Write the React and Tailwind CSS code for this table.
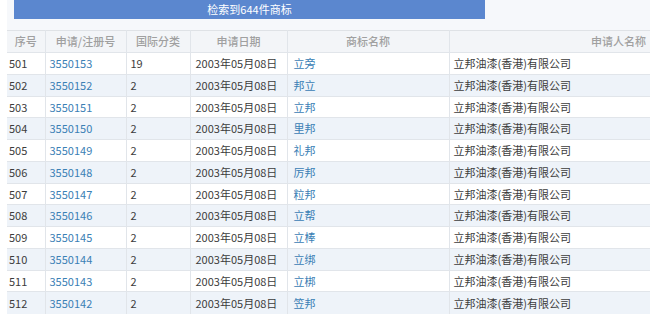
import React from "react";

const rows = [
  ["501", "3550153", "19", "立旁"],
  ["502", "3550152", "2", "邦立"],
  ["503", "3550151", "2", "立邦"],
  ["504", "3550150", "2", "里邦"],
  ["505", "3550149", "2", "礼邦"],
  ["506", "3550148", "2", "厉邦"],
  ["507", "3550147", "2", "粒邦"],
  ["508", "3550146", "2", "立帮"],
  ["509", "3550145", "2", "立棒"],
  ["510", "3550144", "2", "立绑"],
  ["511", "3550143", "2", "立梆"],
  ["512", "3550142", "2", "笠邦"],
];

const App = () => {
  return (
    <div
      className="w-[659px] h-[333px] bg-white overflow-hidden text-[11px] text-[#3c3c3c]"
      style={{ fontFamily: '"Noto Sans CJK SC", "Noto Sans", sans-serif' }}
    >
      <div className="ml-[7px] w-[643px] bg-[#f6f8fb]">
        {/* top bar */}
        <div className="h-[30px] pl-[7px]">
          <div className="w-[471px] h-[19px] bg-[#5b87cf] text-white text-[11px] flex items-center justify-center leading-none">
            检索到644件商标
          </div>
        </div>

        {/* table */}
        <table className="w-full border-collapse table-fixed">
          <colgroup>
            <col className="w-[38px]" />
            <col className="w-[81px]" />
            <col className="w-[64px]" />
            <col className="w-[97px]" />
            <col className="w-[162px]" />
            <col />
          </colgroup>
          <thead>
            <tr className="h-[22px] bg-[#f3f5f8] text-[#a0a0a0] border-t border-[#dfe2e6]">
              <th className="font-medium text-center border-r border-[#e1e5ea]">序号</th>
              <th className="font-medium text-center border-r border-[#e1e5ea]">申请/注册号</th>
              <th className="font-medium text-center border-r border-[#e1e5ea]">国际分类</th>
              <th className="font-medium text-center border-r border-[#e1e5ea]">申请日期</th>
              <th className="font-medium text-center border-r border-[#e1e5ea]">商标名称</th>
              <th className="font-medium text-right pr-[4px]">申请人名称</th>
            </tr>
          </thead>
          <tbody>
            {rows.map((r, i) => (
              <tr
                key={r[0]}
                className={`h-[21.75px] border-t border-[#e1e5ea] ${
                  i % 2 === 1 ? "bg-[#eef3f9]" : "bg-white"
                }`}
              >
                <td className="pl-[2px] border-r border-[#e1e5ea] whitespace-nowrap">{r[0]}</td>
                <td className="pl-[4px] border-r border-[#e1e5ea] text-[#3a80b5] whitespace-nowrap">{r[1]}</td>
                <td className="pl-[4px] border-r border-[#e1e5ea] whitespace-nowrap">{r[2]}</td>
                <td className="pl-[5px] border-r border-[#e1e5ea] whitespace-nowrap">2003年05月08日</td>
                <td className="pl-[6px] border-r border-[#e1e5ea] text-[#3a80b5] whitespace-nowrap">{r[3]}</td>
                <td className="pl-[4px] whitespace-nowrap">立邦油漆(香港)有限公司</td>
              </tr>
            ))}
          </tbody>
        </table>
      </div>
    </div>
  );
};

export default App;
